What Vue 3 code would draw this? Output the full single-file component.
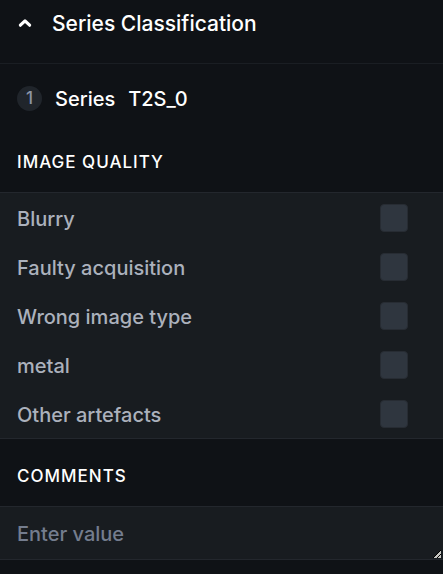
<script setup>
import { ref } from 'vue'

const open = ref(true)
const comments = ref('')
const qualities = ref([
  { id: 'blurry', label: 'Blurry', checked: false },
  { id: 'faulty', label: 'Faulty acquisition', checked: false },
  { id: 'wrong-type', label: 'Wrong image type', checked: false },
  { id: 'metal', label: 'metal', checked: false },
  { id: 'artefacts', label: 'Other artefacts', checked: false },
])
</script>

<template>
  <main class="panel">
    <header class="header">
      <button class="toggle" type="button" :aria-expanded="open" @click="open = !open">
        <svg class="chevron" :class="{ closed: !open }" viewBox="0 0 14 10" aria-hidden="true">
          <path d="M2.4 7.2 7 2.9l4.6 4.3" />
        </svg>
        <span class="label-text">Series Classification</span>
      </button>
    </header>
    <template v-if="open">
      <div class="series">
        <span class="badge">1</span>
        <span class="name">Series</span>
        <span>T2S_0</span>
      </div>
      <section>
        <h2 class="heading">Image quality</h2>
        <div class="options">
          <label v-for="q in qualities" :key="q.id" class="option" :for="q.id">
            <span class="label-text">{{ q.label }}</span>
            <input :id="q.id" v-model="q.checked" class="check" type="checkbox" />
          </label>
        </div>
      </section>
      <section class="comments">
        <h2 class="heading"><label for="comments">Comments</label></h2>
        <textarea id="comments" v-model="comments" class="field" rows="1" placeholder="Enter value"></textarea>
      </section>
    </template>
  </main>
</template>

<style>
body {
  background: #0f1216;
}
</style>

<style scoped>
.panel {
  font-family: "Inter", "Liberation Sans", sans-serif;
  font-size: 20px;
  font-weight: 500;
  line-height: 24px;
  color: #fff;
}
.header {
  padding: 10px 16px 27px;
  border-bottom: 1px solid #1a1e23;
}
.toggle {
  display: flex;
  align-items: center;
  gap: 20px;
  padding: 0 0 0 2px;
  border: 0;
  background: none;
  color: inherit;
  font: inherit;
  font-size: 21px;
  cursor: pointer;
}
.chevron {
  width: 14px;
  height: 10px;
  fill: none;
  stroke: currentColor;
  stroke-width: 3.2;
  stroke-linecap: round;
  stroke-linejoin: round;
}
.closed {
  transform: rotate(180deg);
}
.series {
  display: flex;
  align-items: center;
  min-height: 69px;
  padding: 0 17px;
}
.badge {
  width: 25px;
  border-radius: 50%;
  background: #20252b;
  color: #8d96a6;
  font-size: 17px;
  line-height: 25px;
  text-align: center;
}
.name {
  margin: 0 13px;
}
.heading {
  margin: 0;
  padding: 17px 17px 18px;
  font-size: 17px;
  font-weight: 500;
  line-height: 24px;
  letter-spacing: 1px;
  text-transform: uppercase;
}
.options {
  border-top: 1px solid #23272d;
  border-bottom: 1px solid #23272d;
  background: #181c20;
}
.option {
  display: flex;
  align-items: center;
  justify-content: space-between;
  height: 49px;
  padding: 0 35px 0 17px;
  color: #abb1bc;
}
.label-text {
  display: block;
  padding-top: 2px;
}
.check {
  appearance: none;
  width: 28px;
  height: 28px;
  margin: 0;
  border: 1px solid #272c33;
  border-radius: 4px;
  background: #2f363f;
}
.check:checked {
  background: #6f9bdc;
}
.comments {
  padding-top: 8px;
}
.field {
  display: block;
  box-sizing: border-box;
  width: 100%;
  height: 54px;
  margin: 0;
  padding: 15px 17px 13px;
  border: solid #23272d;
  border-width: 1px 0;
  border-radius: 0;
  outline: 0;
  background: #181c20;
  color: #abb1bc;
  font: inherit;
  resize: vertical;
  overflow: auto;
}
.field::placeholder {
  color: #747d8e;
  opacity: 1;
}
.field::-webkit-resizer {
  background: linear-gradient(135deg, transparent 48%, #000 48% 54%, #c4c4c0 54% 70%, #000 70% 78%, #c4c4c0 78% 94%, transparent 94%) right 2px bottom 1px / 8px 8px no-repeat;
}
</style>
